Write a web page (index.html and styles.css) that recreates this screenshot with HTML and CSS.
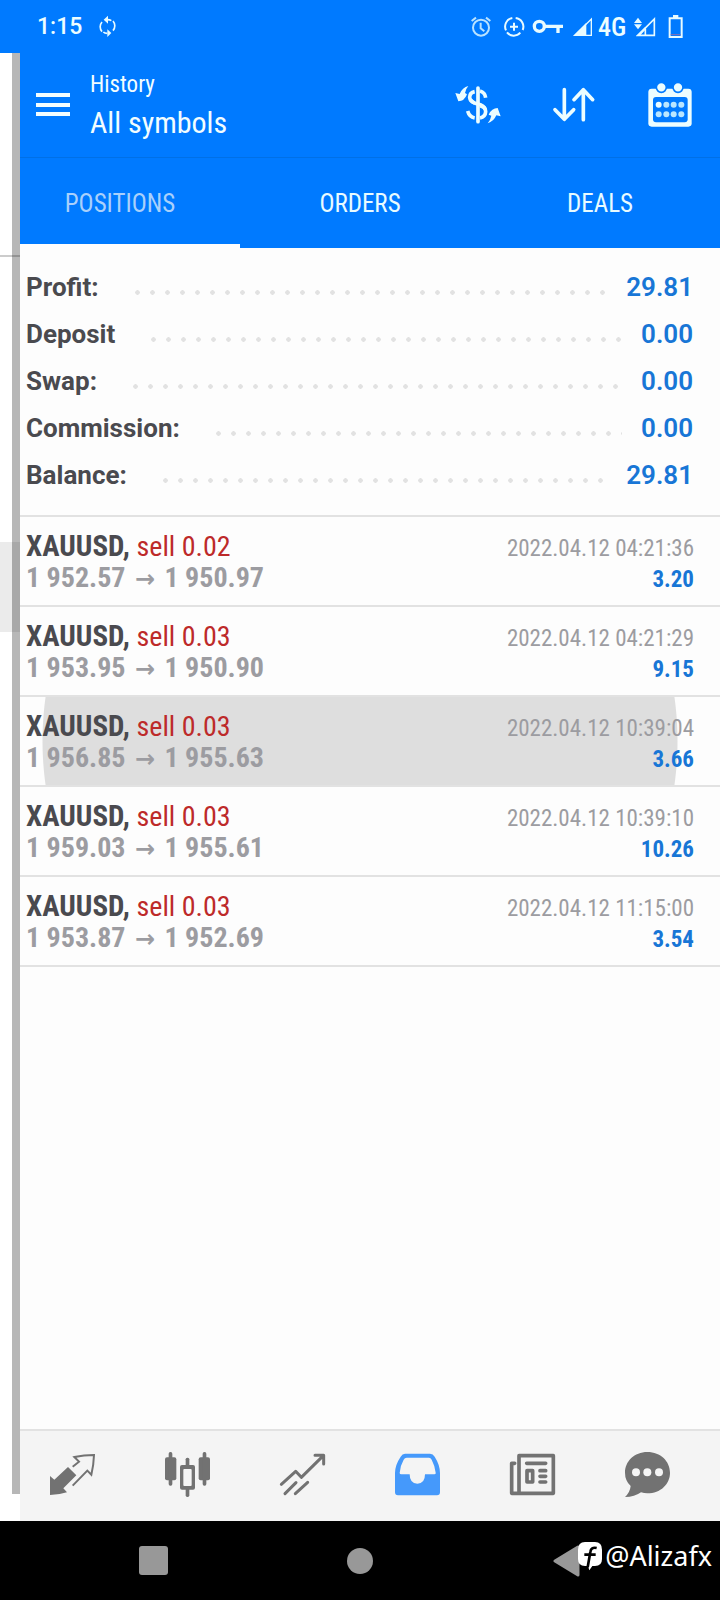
FILE: index.html
```html
<!DOCTYPE html>
<html lang="en">
<head>
<meta charset="utf-8">
<meta name="viewport" content="width=device-width, initial-scale=1">
<title>History</title>
<link rel="stylesheet" href="styles.css">
</head>
<body>
<div class="screen">
  <div class="status">
    <span class="clock">1:15</span>
    <svg class="sync" viewBox="297 45 54 69" width="18" height="23" fill="none" stroke="#e8fbff" stroke-width="5">
      <path d="M306 95A22 22 0 0 1 306 66M339 63A22 22 0 0 1 339 92M322 59Q330 59 334 62M322 100Q314 100 310 96"/>
      <path fill="#e8fbff" stroke="none" d="M324 47v24l-13-12zM322 88v23l12-12z"/>
    </svg>
    <div class="status-icons">
      <svg viewBox="120 42 282 75" width="94" height="25" fill="none" stroke="#e8fbff">
        <g stroke="#b9e2ff" stroke-width="6"><circle cx="153" cy="83" r="24"/><path d="M125 63l13-10M181 63l-13-10M152 68v17l11 9"/></g>
        <path stroke-width="6" d="M247 54A26 26 0 0 0 228 91M231 97A26 26 0 0 0 271 98M278 90A26 26 0 0 0 257 54M252 68v24M240 80h24"/>
        <circle cx="328" cy="79" r="15" stroke-width="10"/><path stroke-width="10" d="M342 79h57M384 79v20"/>
      </svg>
      <svg class="signal" viewBox="426 42 66 75" width="22" height="25"><path fill="none" stroke="#e8fbff" stroke-width="4" d="M435 106L484 57v49z"/><path fill="#e8fbff" d="M429 108L469 68v40z"/></svg>
      <span class="network">4G</span>
      <svg class="signal-two" viewBox="609 42 72 75" width="24" height="25" fill="none" stroke="#e8fbff" stroke-width="5"><path d="M624 106L673 57v49zM646 86v20"/><path fill="#e8fbff" stroke="none" d="M612 69l12-16 12 16zM612 73h24l-12 15zM618 108l28-28v9l-17 19z"/></svg>
      <svg class="battery" viewBox="711 42 51 75" width="17" height="25"><path fill="none" stroke="#e8fbff" stroke-width="6" d="M719 55h36v56h-36z"/><path fill="#e8fbff" d="M729 45h16v10h-16z"/><path stroke="#8a70b0" stroke-width="3" d="M722 104h30"/></svg>
    </div>
  </div>

  <header class="header">
    <button class="menu" aria-label="Menu"><svg viewBox="0 0 35 24" width="35" height="24" fill="#f2fdff"><path d="M0 0h34v4H0zM0 10h34v4H0zM0 19h34v4H0z"/></svg></button>
    <div class="titles">
      <h2 class="overline">History</h2>
      <h1 class="title">All symbols</h1>
    </div>
    <div class="actions">
      <button class="action" aria-label="Currency">
        <svg viewBox="44 77 138 120" width="46" height="40" fill="none" stroke="#ecfdff">
          <path stroke-width="11" stroke-linecap="round" d="M113 86v101"/>
          <path stroke-width="11" d="M103 97Q88 100 88 114Q89 126 103 131M82 155Q87 173 103 176M119 95Q134 99 136 115M119 139Q136 143 136 157Q135 173 119 176"/>
          <path stroke-width="11" d="M90 120Q96 131 113 134Q131 138 135 150"/>
          <path fill="#ecfdff" stroke="none" d="M84 80Q76 89 74 101L80 105Q72 126 54 126L45 101L58 104Q66 84 84 80zM142 192Q151 181 153 169L145 166Q154 146 172 146L181 171L168 168Q160 187 142 192z"/>
        </svg>
      </button>
      <button class="action" aria-label="Sort">
        <svg viewBox="335 77 138 120" width="46" height="40" fill="none" stroke="#ecfdff" stroke-width="11" stroke-linecap="round" stroke-linejoin="round"><path d="M375 91v88M347 151l28 29 28-29M432 181V93M404 121l28-30 28 30"/></svg>
      </button>
      <button class="action" aria-label="Period">
        <svg viewBox="623 65 138 138" width="46" height="46">
          <rect x="627" y="85" width="130" height="114" rx="10" fill="#ecfdff"/>
          <rect x="641" y="110" width="104" height="76" rx="9" fill="#007aff"/>
          <g fill="#ecfdff" stroke="#007aff" stroke-width="5"><circle cx="666" cy="81" r="15"/><circle cx="716" cy="81" r="15"/></g>
          <g fill="#b9e6ff"><circle cx="658" cy="133" r="9" fill="#ecfdff"/><circle cx="681" cy="133" r="9"/><circle cx="703" cy="133" r="9"/><circle cx="726" cy="133" r="9"/><circle cx="658" cy="162" r="9"/><circle cx="681" cy="162" r="9"/><circle cx="703" cy="162" r="9"/><circle cx="726" cy="162" r="9"/></g>
        </svg>
      </button>
    </div>
  </header>

  <nav class="tabs">
    <button class="tab tab-active">POSITIONS</button>
    <button class="tab">ORDERS</button>
    <button class="tab">DEALS</button>
  </nav>

  <main class="content">
    <dl class="summary">
      <div class="sum-row"><dt>Profit:</dt><dd>29.81</dd></div>
      <div class="sum-row"><dt>Deposit</dt><dd>0.00</dd></div>
      <div class="sum-row"><dt>Swap:</dt><dd>0.00</dd></div>
      <div class="sum-row"><dt>Commission:</dt><dd>0.00</dd></div>
      <div class="sum-row"><dt>Balance:</dt><dd>29.81</dd></div>
    </dl>
    <ul class="trades">
      <li class="trade"><div class="line"><span class="symbol">XAUUSD, <span class="side">sell 0.02</span></span><time class="time">2022.04.12 04:21:36</time></div><div class="line"><span class="prices">1 952.57 <span class="arrow">→</span> 1 950.97</span><span class="profit">3.20</span></div></li>
      <li class="trade"><div class="line"><span class="symbol">XAUUSD, <span class="side">sell 0.03</span></span><time class="time">2022.04.12 04:21:29</time></div><div class="line"><span class="prices">1 953.95 <span class="arrow">→</span> 1 950.90</span><span class="profit">9.15</span></div></li>
      <li class="trade pressed"><div class="line"><span class="symbol">XAUUSD, <span class="side">sell 0.03</span></span><time class="time">2022.04.12 10:39:04</time></div><div class="line"><span class="prices">1 956.85 <span class="arrow">→</span> 1 955.63</span><span class="profit">3.66</span></div></li>
      <li class="trade"><div class="line"><span class="symbol">XAUUSD, <span class="side">sell 0.03</span></span><time class="time">2022.04.12 10:39:10</time></div><div class="line"><span class="prices">1 959.03 <span class="arrow">→</span> 1 955.61</span><span class="profit">10.26</span></div></li>
      <li class="trade"><div class="line"><span class="symbol">XAUUSD, <span class="side">sell 0.03</span></span><time class="time">2022.04.12 11:15:00</time></div><div class="line"><span class="prices">1 953.87 <span class="arrow">→</span> 1 952.69</span><span class="profit">3.54</span></div></li>
    </ul>
  </main>

  <nav class="bottom">
    <button class="dest" aria-label="Quotes"><svg viewBox="147 123 141 141" width="47" height="47"><path fill="#727272" d="M204 171L229 196 190 235 201 247Q176 255 150 255V198L163 209z"/><path fill="none" stroke="#727272" stroke-width="6" d="M218 170L237 155 223 141Q252 135 282 135Q281 165 274 194L262 182 218 227"/></svg></button>
    <button class="dest" aria-label="Charts"><svg viewBox="492 123 141 141" width="47" height="47"><g fill="#727272"><rect x="495" y="142" width="34" height="69" rx="6"/><rect x="596" y="142" width="34" height="69" rx="6"/><rect x="506" y="126" width="11" height="101" rx="5"/><rect x="608" y="126" width="11" height="101" rx="5"/><rect x="557" y="143" width="11" height="118" rx="5"/><rect x="540" y="165" width="45" height="74" rx="6"/></g><rect x="550" y="177" width="25" height="51" rx="3" fill="#f4f4f4"/></svg></button>
    <button class="dest" aria-label="Trade"><svg viewBox="837 123 141 141" width="47" height="47" fill="none" stroke="#727272" stroke-width="9" stroke-linecap="round" stroke-linejoin="round"><path d="M844 223L887 184 904 202 970 137M945 136h26v26M855 251l33-33M886 251l37-34"/></svg></button>
    <button class="dest" aria-label="History"><svg viewBox="102 123 141 141" width="47" height="47"><path fill="#4599fb" fill-rule="evenodd" d="M135 131H210Q219 131 224 140Q240 165 240 189V247Q240 256 231 256H114Q105 256 105 247V189Q105 165 122 140Q127 131 135 131zM140 143Q134 143 131 149Q120 168 119 189Q119 193 124 193H149Q149 221 172 221T195 193H223Q228 193 227 188Q225 168 215 149Q212 143 207 143z"/></svg></button>
    <button class="dest" aria-label="News"><svg viewBox="447 123 141 141" width="47" height="47" fill="none" stroke="#727272" stroke-width="11" stroke-linecap="round" stroke-linejoin="round"><path d="M477 137h103v113H455V160h9M477 137v112M500 160h57M501 182h17v34h-17zM540 182h17M540 199h17M540 216h17"/></svg></button>
    <button class="dest" aria-label="Messages"><svg viewBox="792 123 141 141" width="47" height="47"><path fill="#727272" d="M862 126C902 126 930 154 930 188S902 250 862 250Q852 250 843 247Q824 261 795 261Q810 247 812 228Q795 212 795 188C795 154 823 126 862 126z"/><g fill="#f4f4f4"><circle cx="828" cy="187" r="12"/><circle cx="862" cy="187" r="12"/><circle cx="897" cy="187" r="12"/></g></svg></button>
  </nav>

  <div class="drawer"><div class="drawer-shade"></div><div class="drawer-line"></div><div class="drawer-item"></div></div>

  <footer class="system">
    <button class="key" aria-label="Recent apps"><svg viewBox="0 0 32 32" width="32" height="32"><rect x="2" y="1" width="29" height="29" rx="3" fill="#989898"/></svg></button>
    <button class="key" aria-label="Home"><svg viewBox="0 0 32 32" width="32" height="32"><circle cx="16" cy="16" r="13" fill="#989898"/></svg></button>
    <button class="key" aria-label="Back"><svg viewBox="0 0 32 32" width="32" height="32"><path d="M4 16L27 2v28z" fill="#989898" stroke="#989898" stroke-width="3" stroke-linejoin="round"/></svg></button>
    <div class="watermark">
      <svg viewBox="648 399 78 90" width="26" height="30"><path fill="#fff" d="M672 402H702Q723 402 723 425V453Q723 474 702 474H694L685 487L681 474H672Q651 474 651 453V425Q651 402 672 402z"/><path fill="none" stroke="#000" stroke-width="8" d="M707 420Q690 416 688 432L680 478M670 440h34"/></svg>
      <span>@Alizafx</span>
    </div>
  </footer>
</div>
</body>
</html>
```
FILE: styles.css
```css
* { box-sizing: border-box; }
body { margin: 0; background: #fdfdfd; font-family: Roboto, "Liberation Sans", sans-serif; }
h1, h2, dl, dd, ul { margin: 0; padding: 0; }
ul { list-style: none; }
button { margin: 0; padding: 0; border: 0; background: none; font: inherit; color: inherit; }
svg { display: block; flex: none; }

.screen { position: relative; display: flex; flex-direction: column; min-height: 100vh; }

.status { display: flex; align-items: center; height: 53px; padding: 0 36px 0 37px; background: #007aff; color: #ecfdff; }
.clock { font-size: 23px; font-weight: 500; }
.sync { margin-left: 17px; }
.status-icons { display: flex; align-items: center; margin-left: auto; }
.signal { margin-left: 8px; }
.network { width: 39px; padding-left: 4px; font: 500 26px/28px "Roboto Condensed", Roboto, sans-serif; }
.battery { margin-left: 10px; }

.header { display: flex; align-items: center; height: 105px; padding: 0 2px 0 36px; background: #007aff; border-bottom: 1px solid #0070e6; color: #f2fdff; }
.titles { margin-left: 19px; font-family: "Roboto Condensed", Roboto, sans-serif; }
.overline { font-size: 23px; line-height: 36px; font-weight: 400; }
.title { font-size: 30px; line-height: 40px; font-weight: 400; }
.actions { display: flex; margin-left: auto; }
.action { display: flex; justify-content: center; align-items: center; width: 96px; height: 64px; }

.tabs { display: grid; grid-template-columns: repeat(3, 1fr); height: 90px; background: #007aff; }
.tab { padding-top: 6px; border-bottom: 4px solid transparent; color: #e8fbff; font: 25px/30px "Roboto Condensed", Roboto, sans-serif; }
.tab-active { border-bottom-color: #fdfdfd; color: #a9d0fb; }

.content { flex: 1; background: #fdfdfd; }
.summary { padding: 15px 27px 17px 26px; border-bottom: 2px solid #e2e2e2; }
.sum-row { display: flex; align-items: center; height: 47px; font-size: 26px; font-weight: 700; color: #4a4a4f; }
.sum-row::before { content: ""; order: 1; flex: 1; height: 5px; margin: 11px 19px 0 36px; background: radial-gradient(circle closest-side, #e2e2e2 80%, transparent) -5px 0 / 15px 5px repeat-x; }
.sum-row dd { order: 2; font-weight: 600; color: #1876d6; }

.trade { height: 90px; padding: 13px 26px 0; border-bottom: 2px solid #e2e2e2; font-family: "Roboto Condensed", Roboto, sans-serif; }
.line { display: flex; justify-content: space-between; align-items: baseline; height: 32px; line-height: 32px; }
.symbol { font-size: 29px; font-weight: 700; color: #4a4a4f; }
.side { font-size: 28px; font-weight: 400; color: #bd2a2a; }
.time { font-size: 23px; color: #9c9ca1; }
.prices { font-size: 28px; font-weight: 700; color: #9c9ca1; }
.arrow { margin: 0 3px; font-family: "Noto Sans", "DejaVu Sans", sans-serif; font-size: 24px; }
.profit { font-size: 23px; font-weight: 700; color: #1876d6; }
.pressed { background: radial-gradient(circle at center, #dedede 317px, transparent 318px); }

.bottom { display: grid; grid-template-columns: repeat(6, 1fr); height: 92px; padding: 0 15px 3px; background: #f4f4f4; border-top: 2px solid #e2e2e2; }
.dest { display: flex; justify-content: center; align-items: center; }

.drawer { position: absolute; top: 53px; bottom: 79px; left: 0; width: 20px; background: #fff; }
.drawer-shade { position: absolute; top: 0; bottom: 27px; right: 0; width: 8px; background: #b7b7b7; }
.drawer-line { position: absolute; top: 202px; left: 0; right: 0; height: 2px; background: rgba(0, 0, 0, .2); }
.drawer-item { position: absolute; top: 489px; left: 0; right: 0; height: 90px; background: rgba(0, 0, 0, .08); }

.system { position: relative; display: flex; justify-content: center; align-items: center; gap: 175px; height: 79px; background: #000; }
.watermark { position: absolute; right: 8px; top: 17px; display: flex; align-items: center; gap: 2px; color: #fff; font: 27px/36px "Noto Sans", sans-serif; }
```
